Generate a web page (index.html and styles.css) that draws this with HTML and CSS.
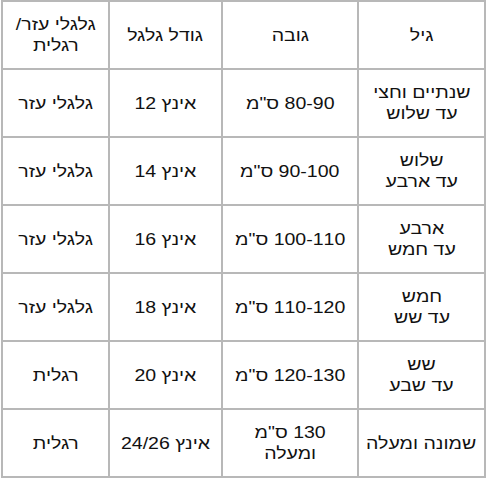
FILE: index.html
```html
<!DOCTYPE html>
<html lang="he" dir="rtl">
<head>
<meta charset="utf-8">
<title>טבלת מידות אופניים</title>
<link rel="stylesheet" href="styles.css">
</head>
<body>
<div class="table" role="table">
  <div class="cell head"><span>גיל</span></div>
  <div class="cell head"><span>גובה</span></div>
  <div class="cell head"><span>גודל גלגל</span></div>
  <div class="cell head"><span>גלגלי עזר/<br>רגלית</span></div>

  <div class="cell"><span>שנתיים וחצי<br>עד שלוש</span></div>
  <div class="cell"><span>80-90 ס"מ</span></div>
  <div class="cell"><span>אינץ 12</span></div>
  <div class="cell"><span>גלגלי עזר</span></div>

  <div class="cell"><span>שלוש<br>עד ארבע</span></div>
  <div class="cell"><span>90-100 ס"מ</span></div>
  <div class="cell"><span>אינץ 14</span></div>
  <div class="cell"><span>גלגלי עזר</span></div>

  <div class="cell"><span>ארבע<br>עד חמש</span></div>
  <div class="cell"><span>100-110 ס"מ</span></div>
  <div class="cell"><span>אינץ 16</span></div>
  <div class="cell"><span>גלגלי עזר</span></div>

  <div class="cell"><span>חמש<br>עד שש</span></div>
  <div class="cell"><span>110-120 ס"מ</span></div>
  <div class="cell"><span>אינץ 18</span></div>
  <div class="cell"><span>גלגלי עזר</span></div>

  <div class="cell"><span>שש<br>עד שבע</span></div>
  <div class="cell"><span>120-130 ס"מ</span></div>
  <div class="cell"><span>אינץ 20</span></div>
  <div class="cell"><span>רגלית</span></div>

  <div class="cell"><span>שמונה ומעלה</span></div>
  <div class="cell"><span>130 ס"מ<br>ומעלה</span></div>
  <div class="cell"><span>אינץ 24/26</span></div>
  <div class="cell"><span>רגלית</span></div>
</div>
</body>
</html>
```

FILE: styles.css
```css
html, body {
  margin: 0;
  padding: 0;
  background: #ffffff;
}

body {
  font-family: "Liberation Sans", Arial, sans-serif;
  font-size: 16px;
  color: #111111;
}

.table {
  direction: rtl;
  display: grid;
  grid-template-columns: 125px 134px 111px 105px;
  grid-template-rows: repeat(7, 66px);
  gap: 2px;
  padding: 2px;
  width: 485px;
  box-sizing: border-box;
  background: #b8b8b8;
}

.cell {
  background: #ffffff;
  display: flex;
  align-items: center;
  justify-content: center;
  text-align: center;
  line-height: 21px;
}

.cell span {
  display: inline-block;
  transform: scaleX(1.22);
}
```
